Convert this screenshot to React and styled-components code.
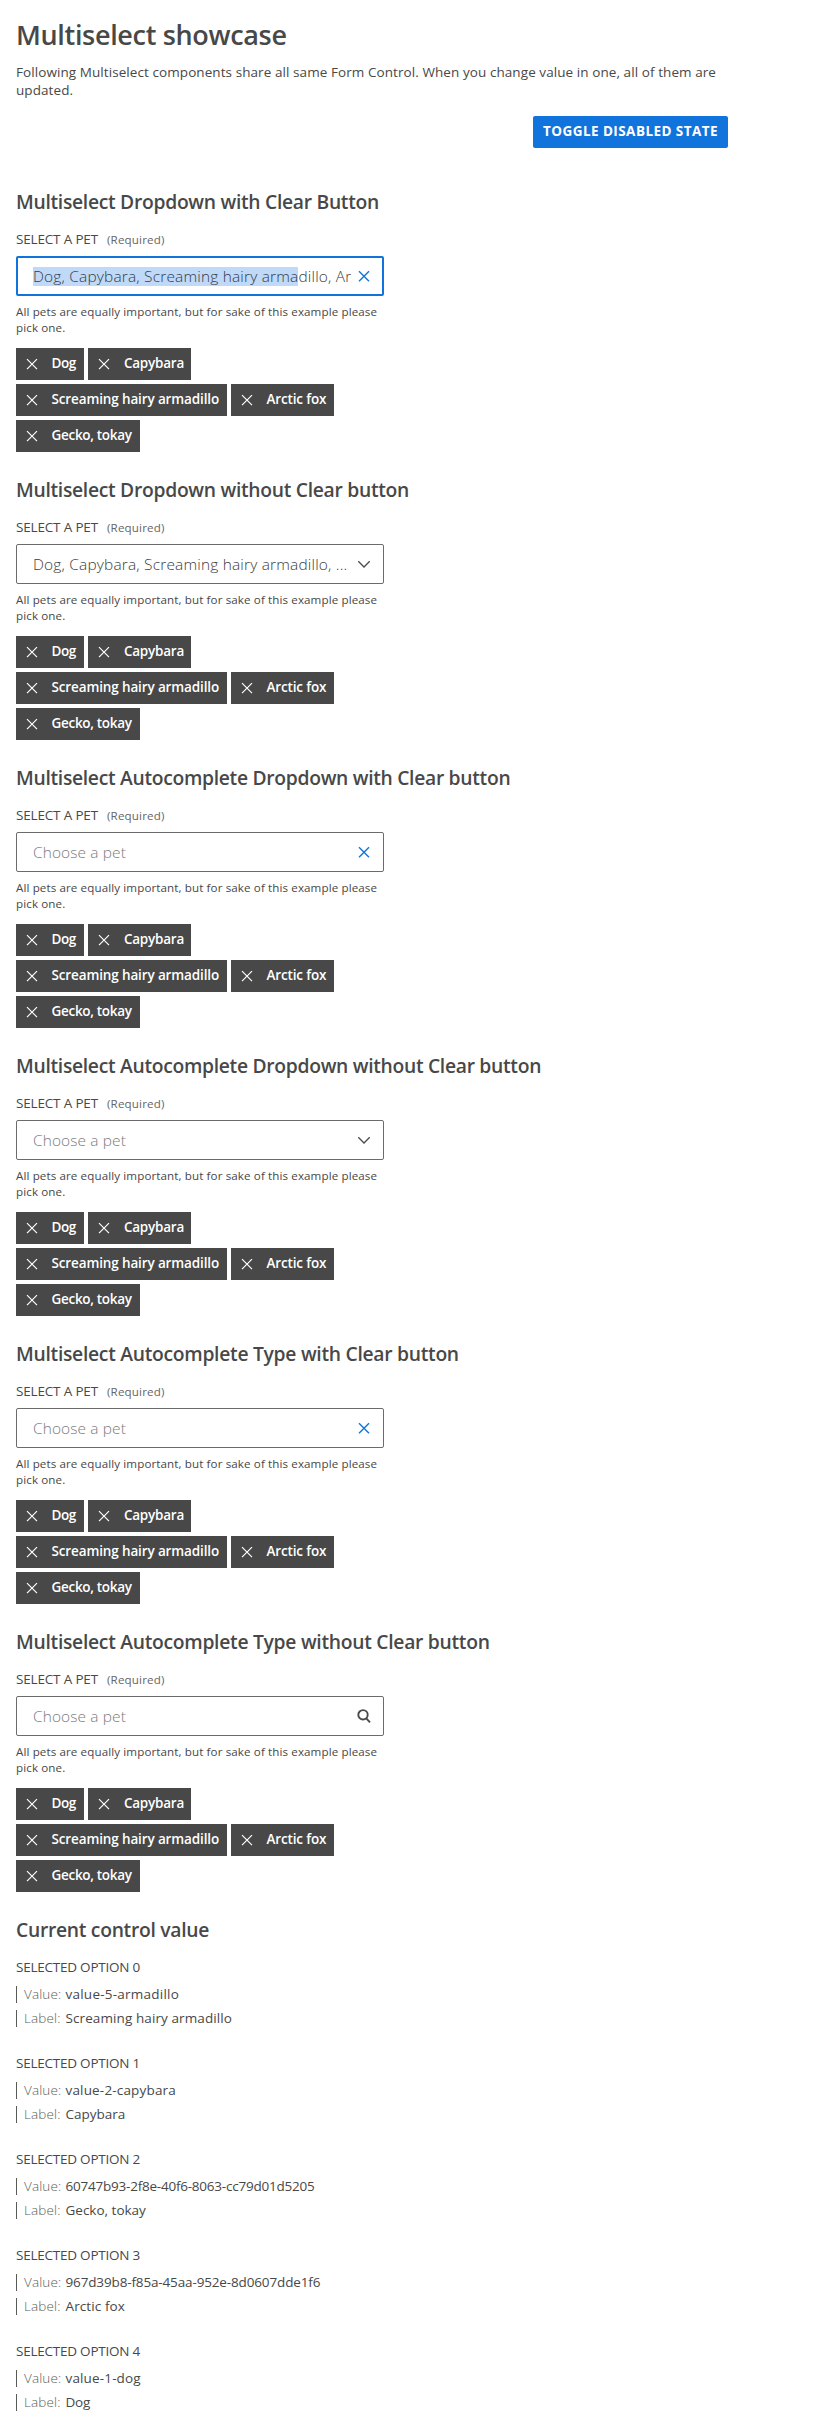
import React from "react";
import styled, { createGlobalStyle } from "styled-components";

const GlobalStyle = createGlobalStyle`
  * { box-sizing: border-box; }
  body {
    margin: 0;
    background: #fff;
    color: #484848;
    font-family: "Open Sans", "Noto Sans", sans-serif;
    font-size: 13.5px;
  }
`;

const Page = styled.main`
  width: 728px;
  min-height: 2432px;
  padding: 18px 0 0 16px;
`;

const Title = styled.h1`
  margin: 0 0 11px;
  font: 600 27px/34px "Open Sans", sans-serif;
  letter-spacing: -0.33px;
`;

const Intro = styled.p`
  margin: 0;
  line-height: 18px;
  letter-spacing: 0.075px;
`;

const Actions = styled.div`
  display: flex;
  justify-content: flex-end;
  margin: 17px 0 42px;
`;

const ToggleButton = styled.button`
  width: 195px;
  height: 32px;
  padding: 0 0 2px;
  border: 0;
  border-radius: 2px;
  background: #1174dc;
  color: #fff;
  font: 700 13.5px "Open Sans", sans-serif;
  letter-spacing: 0.44px;
  white-space: nowrap;
`;

const Section = styled.section`
  width: 368px;
  margin-bottom: 26px;
`;

const Heading = styled.h2`
  margin: 0 0 16px;
  font: 600 19.3px/24px "Open Sans", sans-serif;
  letter-spacing: ${(p) => p.$track}px;
  white-space: nowrap;
`;

const FieldLabel = styled.div`
  display: flex;
  align-items: baseline;
  gap: 9px;
  height: 18px;
  margin-bottom: 8px;
  line-height: 18px;
  letter-spacing: -0.17px;
`;

const Required = styled.span`
  color: #666;
  font-size: 11.6px;
  letter-spacing: 0.168px;
`;

const Control = styled.div`
  display: flex;
  align-items: center;
  gap: 5px;
  height: 40px;
  padding: 0 ${(p) => (p.$focused ? 10 : 11)}px 0 ${(p) => (p.$focused ? 15 : 16)}px;
  border: ${(p) => (p.$focused ? "2px solid #1174dc" : "1px solid #6b6b6b")};
  border-radius: 2px;
`;

const ControlText = styled.div`
  flex: 1;
  min-width: 0;
  overflow: hidden;
  text-overflow: ${(p) => (p.$clip ? "clip" : "ellipsis")};
  white-space: nowrap;
  color: ${(p) => (p.$placeholder ? "#7a7a7a" : "#3c3c3c")};
  font-size: 15.44px;
  font-weight: 300;
  line-height: 21px;
  letter-spacing: ${(p) => (p.$placeholder ? 0.124 : 0.19)}px;
`;

const Highlight = styled.mark`
  display: inline-block;
  background: #c0d9f8;
  color: #303c4a;
  line-height: 19px;
`;

const Helper = styled.p`
  margin: 8px 0 12px;
  font-size: 11.6px;
  line-height: 16px;
  letter-spacing: 0.11px;
`;

const Chips = styled.div`
  display: flex;
  flex-wrap: wrap;
  gap: 4px;
`;

const Chip = styled.div`
  display: flex;
  align-items: center;
  gap: 13.5px;
  width: ${(p) => p.$width}px;
  height: 32px;
  padding-left: 10px;
  background: #484848;
  color: #fff;
`;

const ChipText = styled.span`
  padding-bottom: 2px;
  font: 600 13.5px "Open Sans", sans-serif;
  letter-spacing: ${(p) => p.$track}px;
  white-space: nowrap;
`;

const Icon = styled.svg`
  flex: none;
  display: block;
  fill: none;
  stroke: ${(p) => p.$color};
  stroke-width: ${(p) => p.$weight || 1.3}px;
`;

const Option = styled.div`
  display: flex;
  flex-direction: column;
  gap: 7px;
  margin-bottom: 27px;
`;

const OptionTitle = styled.div`
  margin-bottom: 3px;
  line-height: 18px;
  letter-spacing: -0.23px;
`;

const OptionRow = styled.div`
  display: flex;
  height: 17px;
  padding-left: 7px;
  border-left: 1px solid #5a5a5a;
  line-height: 17px;
  letter-spacing: ${(p) => p.$track}px;
  white-space: nowrap;
`;

const Key = styled.span`
  width: 41.5px;
  color: #5c5c5c;
  font-weight: 300;
  letter-spacing: 0.124px;
`;

const ICONS = {
  clear: (
    <Icon width="16" height="16" viewBox="0 0 16 16" $color="#1174dc" $weight={1.4}>
      <path d="M3 3.3 13 13.3M13 3.3 3 13.3" />
    </Icon>
  ),
  chevron: (
    <Icon width="16" height="16" viewBox="0 0 16 16" $color="#4a4a4a">
      <path d="M2.3 5.3 8 11 13.7 5.3" />
    </Icon>
  ),
  search: (
    <Icon width="16" height="16" viewBox="0 0 16 16" $color="#4a4a4a" $weight={1.9}>
      <circle cx="7" cy="6.8" r="4.7" />
      <path d="M10.3 10.3 14 14.3" />
    </Icon>
  ),
};

const PETS = [
  { name: "Dog", width: 68.4, track: -0.4 },
  { name: "Capybara", width: 102.7, track: -0.22 },
  { name: "Screaming hairy armadillo", width: 211, track: -0.13 },
  { name: "Arctic fox", width: 102.7, track: -0.15 },
  { name: "Gecko, tokay", width: 123.7, track: -0.3 },
];

const FIELDS = [
  { title: "Multiselect Dropdown with Clear Button", track: -0.29, icon: "clear", kind: "focused" },
  { title: "Multiselect Dropdown without Clear button", track: -0.29, icon: "chevron", kind: "value" },
  { title: "Multiselect Autocomplete Dropdown with Clear button", track: -0.3, icon: "clear" },
  { title: "Multiselect Autocomplete Dropdown without Clear button", track: -0.3, icon: "chevron" },
  { title: "Multiselect Autocomplete Type with Clear button", track: -0.28, icon: "clear" },
  { title: "Multiselect Autocomplete Type without Clear button", track: -0.28, icon: "search" },
];

const OPTIONS = [
  { value: "value-5-armadillo", label: "Screaming hairy armadillo", track: 0.24, labelTrack: 0.097 },
  { value: "value-2-capybara", label: "Capybara", track: 0.17, labelTrack: 0 },
  { value: "60747b93-2f8e-40f6-8063-cc79d01d5205", label: "Gecko, tokay", track: -0.223, labelTrack: 0 },
  { value: "967d39b8-f85a-45aa-952e-8d0607dde1f6", label: "Arctic fox", track: -0.14, labelTrack: 0.1 },
  { value: "value-1-dog", label: "Dog", track: 0.15, labelTrack: -0.2 },
];

function FieldValue({ kind }) {
  if (kind === "focused") {
    return (
      <ControlText $clip>
        <Highlight>Dog, Capybara, Screaming hairy arma</Highlight>dillo, Ar
      </ControlText>
    );
  }
  if (kind === "value") {
    return <ControlText>Dog, Capybara, Screaming hairy armadillo, ...</ControlText>;
  }
  return <ControlText $placeholder>Choose a pet</ControlText>;
}

function Multiselect({ title, track, icon, kind }) {
  return (
    <Section>
      <Heading $track={track}>{title}</Heading>
      <FieldLabel>
        SELECT A PET <Required>(Required)</Required>
      </FieldLabel>
      <Control $focused={kind === "focused"}>
        <FieldValue kind={kind} />
        {ICONS[icon]}
      </Control>
      <Helper>All pets are equally important, but for sake of this example please pick one.</Helper>
      <Chips>
        {PETS.map((pet) => (
          <Chip key={pet.name} $width={pet.width}>
            <Icon width="12" height="12" viewBox="0 0 12 12" $color="#fff" $weight={1.2}>
              <path d="M1 1.2 11 11.2M11 1.2 1 11.2" />
            </Icon>
            <ChipText $track={pet.track}>{pet.name}</ChipText>
          </Chip>
        ))}
      </Chips>
    </Section>
  );
}

export default function App() {
  return (
    <Page>
      <GlobalStyle />
      <Title>Multiselect showcase</Title>
      <Intro>
        Following Multiselect components share all same Form Control. When you change value in one, all of them are
        updated.
      </Intro>
      <Actions>
        <ToggleButton>TOGGLE DISABLED STATE</ToggleButton>
      </Actions>
      {FIELDS.map((field) => (
        <Multiselect key={field.title} {...field} />
      ))}
      <Heading $track={-0.28}>Current control value</Heading>
      {OPTIONS.map((option, i) => (
        <Option key={option.value}>
          <OptionTitle>SELECTED OPTION {i}</OptionTitle>
          <OptionRow $track={option.track}>
            <Key>Value:</Key>
            {option.value}
          </OptionRow>
          <OptionRow $track={option.labelTrack}>
            <Key>Label:</Key>
            {option.label}
          </OptionRow>
        </Option>
      ))}
    </Page>
  );
}
